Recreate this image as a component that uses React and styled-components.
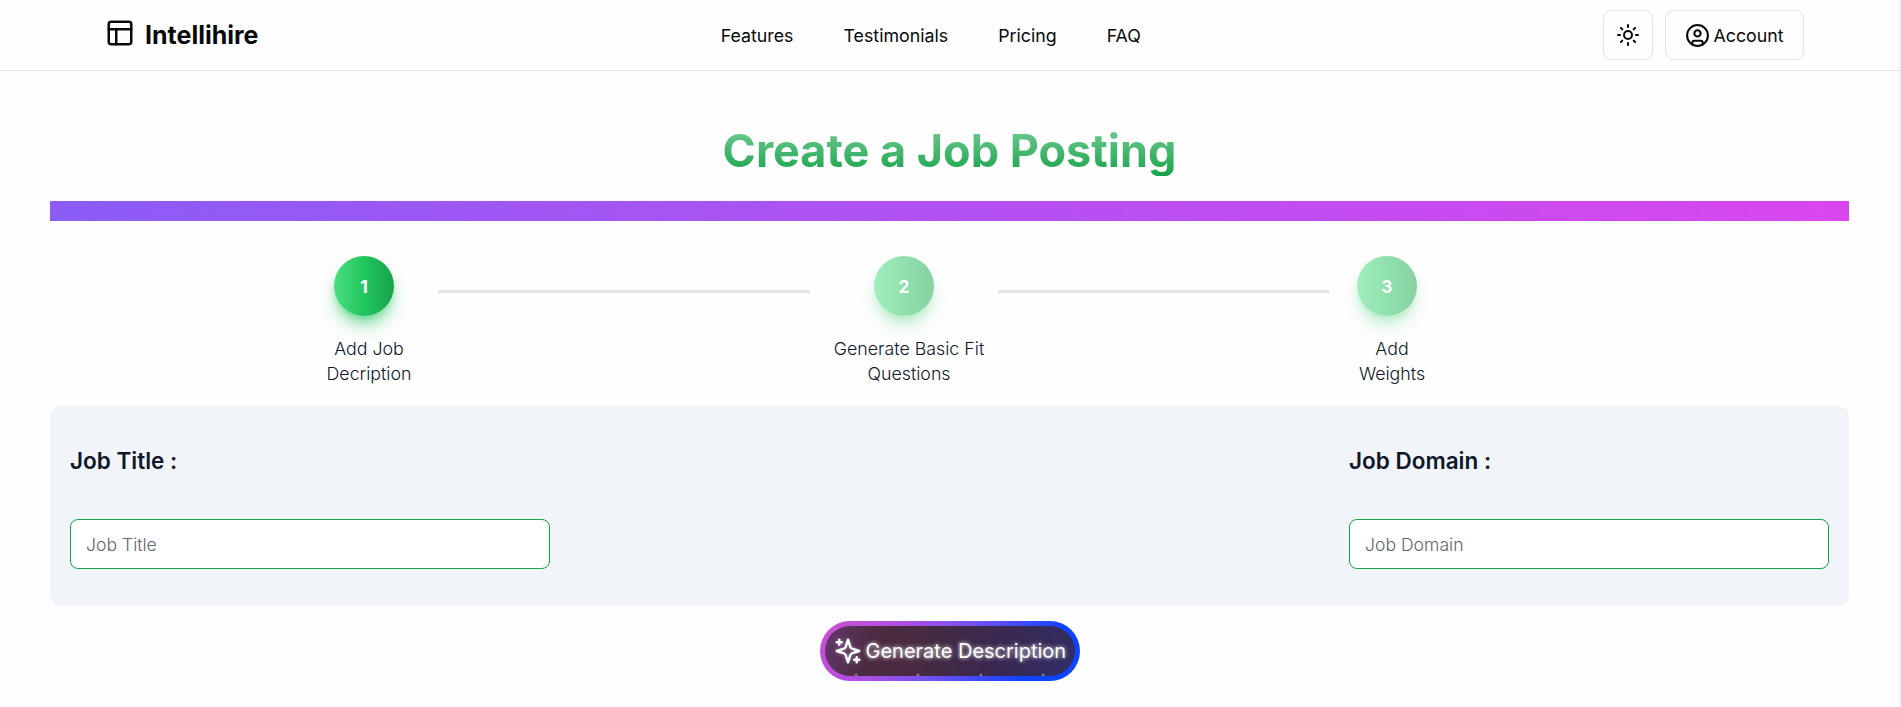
import React from "react";
import styled, { createGlobalStyle } from "styled-components";
import { PanelsTopLeft, Sun, CircleUser } from "lucide-react";

const GlobalStyle = createGlobalStyle`
  *, *::before, *::after { box-sizing: border-box; }
  html { background: #f1f1f1; }
  body {
    margin: 0;
    overflow: hidden;
    font-family: Inter, "Liberation Sans", sans-serif;
    font-size: 17.8px;
    line-height: 25px;
    color: #09090b;
  }
`;

const Page = styled.div`
  width: calc(100vw - 2px);
  height: 100vh;
  background: #fefefe;
`;

const Header = styled.header`
  height: 71px;
  padding: 0 95px 0 105px;
  display: flex;
  justify-content: space-between;
  align-items: center;
  border-bottom: 1px solid #e4e4e7;
`;

const Brand = styled.a`
  display: flex;
  align-items: center;
  gap: 10px;
  font-size: 25px;
  font-weight: 700;
  svg { margin-top: -4px; }
`;

const Nav = styled.nav`
  display: flex;
  gap: 50px;
`;

const NavLink = styled.a`
  color: #09090b;
`;

const Actions = styled.div`
  display: flex;
  justify-content: flex-end;
  gap: 12px;
`;

const OutlineButton = styled.button`
  height: 50px;
  width: ${(p) => p.$width}px;
  display: flex;
  align-items: center;
  justify-content: center;
  gap: 3px;
  padding: 0;
  border: 1px solid #e4e4e7;
  border-radius: 8px;
  background: transparent;
  font: inherit;
  color: inherit;
`;

const Main = styled.main`
  padding: 54px 50px 0;
  display: flex;
  flex-direction: column;
`;

const Title = styled.h1`
  margin: 0 auto 25px;
  font-size: 45px;
  line-height: 51px;
  font-weight: 700;
  color: transparent;
  background: linear-gradient(to bottom, #77cc96, #16a34a);
  background-clip: text;
  -webkit-background-clip: text;
`;

const Banner = styled.div`
  height: 20px;
  background: linear-gradient(to right, #8b5cf6, #d946ef);
`;

const Steps = styled.ol`
  margin: 35px 0 0;
  padding: 0 0 0 250px;
  height: 150px;
  display: flex;
  list-style: none;
`;

const Step = styled.li`
  width: ${(p) => p.$width}px;
  display: flex;
  flex-direction: column;
  align-items: center;
  gap: 20px;
`;

const StepCircle = styled.div`
  width: 60px;
  height: 60px;
  margin-right: 10px;
  flex: none;
  display: flex;
  align-items: center;
  justify-content: center;
  border-radius: 50%;
  color: #fff;
  font-weight: 700;
  background: linear-gradient(to right, #4ade80, #22c55e, #16a34a);
  box-shadow: 0 12px 18px -3px rgba(34, 197, 94, 0.5), 0 5px 8px -3px rgba(34, 197, 94, 0.5);
  opacity: ${(p) => (p.$active ? 1 : 0.5)};
`;

const StepLabel = styled.div`
  font-weight: 300;
  text-align: center;
  white-space: pre-line;
  color: #0f172a;
`;

const Connector = styled.li`
  width: ${(p) => p.$width}px;
  height: 3px;
  margin: 34px 10px 0 0;
  background: #e4e4e7;
`;

const Panel = styled.section`
  height: 200px;
  padding: 43px 20px 0;
  display: flex;
  justify-content: space-between;
  border-radius: 10px;
  background: #f1f5f9;
`;

const Field = styled.label`
  width: 480px;
  display: flex;
  flex-direction: column;
  gap: 46px;
`;

const FieldName = styled.span`
  font-size: 22.5px;
  line-height: 24px;
  font-weight: 600;
  color: #0f172a;
`;

const TextInput = styled.input`
  width: 100%;
  height: 50px;
  padding: 0 15px;
  border: 1px solid #16a34a;
  border-radius: 8px;
  background: #fff;
  font: inherit;
  font-size: 17.6px;
  font-weight: 300;
  &::placeholder { color: #64646c; opacity: 1; }
`;

const GenerateButton = styled.button`
  width: 260px;
  height: 60px;
  margin: 15px auto 0;
  padding: 5px;
  display: flex;
  border: 0;
  border-radius: 30px;
  background: linear-gradient(130deg, #d050d0 0%, #a94fe4 30%, #7650f0 50%, #0f44ff 80%);
  font: inherit;
`;

const GenerateFace = styled.span`
  flex: 1;
  display: flex;
  align-items: center;
  gap: 3px;
  padding-left: 8px;
  border-radius: 25px;
  overflow: hidden;
  color: #fff;
  font-size: 20px;
  font-weight: 400;
  white-space: nowrap;
  text-shadow: 0 0 4px #fff;
  background:
    radial-gradient(circle 2px at 31px 49px, #a9a0ac, transparent),
    radial-gradient(circle 2px at 93px 49px, #a9a0ac, transparent),
    radial-gradient(circle 2px at 156px 49px, #a9a0ac, transparent),
    radial-gradient(circle 2px at 218px 49px, #a9a0ac, transparent),
    radial-gradient(ellipse 55px 45px at 68px 28px, rgba(82, 42, 64, 0.45), transparent),
    linear-gradient(108deg, #66366e 0%, #4b2b43 19%, #432b42 42%, #3a2850 68%, #302e65 100%);
  svg { overflow: visible; filter: drop-shadow(0 0 2px rgba(255, 255, 255, 0.35)); }
`;

const SparklesIcon = () => (
  <svg width="30" height="30" viewBox="0 0 24 24" fill="none" stroke="currentColor" strokeWidth="2" strokeLinecap="round" strokeLinejoin="round">
    <path d="m12 3-1.912 5.813a2 2 0 0 1-1.275 1.275L3 12l5.813 1.912a2 2 0 0 1 1.275 1.275L12 21l1.912-5.813a2 2 0 0 1 1.275-1.275L21 12l-5.813-1.912a2 2 0 0 1-1.275-1.275L12 3Z" />
    <path d="M5 3v4M19 17v4M3 5h4M17 19h4" />
  </svg>
);

const links = ["Features", "Testimonials", "Pricing", "FAQ"];
const fields = ["Job Title", "Job Domain"];

export default function App() {
  return (
    <Page>
      <GlobalStyle />
      <Header>
        <Brand>
          <PanelsTopLeft size={30} />
          Intellihire
        </Brand>
        <Nav>
          {links.map((name) => (
            <NavLink key={name}>{name}</NavLink>
          ))}
        </Nav>
        <Actions>
          <OutlineButton $width={50} aria-label="Toggle theme">
            <Sun size={24} />
          </OutlineButton>
          <OutlineButton $width={139}>
            <CircleUser size={25} />
            Account
          </OutlineButton>
        </Actions>
      </Header>
      <Main>
        <Title>Create a Job Posting</Title>
        <Banner />
        <Steps>
          <Step $width={138}>
            <StepCircle $active>1</StepCircle>
            <StepLabel>{"Add Job\nDecription"}</StepLabel>
          </Step>
          <Connector $width={372} />
          <Step $width={178}>
            <StepCircle>2</StepCircle>
            <StepLabel>{"Generate Basic Fit\nQuestions"}</StepLabel>
          </Step>
          <Connector $width={331} />
          <Step $width={106}>
            <StepCircle>3</StepCircle>
            <StepLabel>{"Add\nWeights"}</StepLabel>
          </Step>
        </Steps>
        <Panel>
          {fields.map((name) => (
            <Field key={name}>
              <FieldName>{name} :</FieldName>
              <TextInput placeholder={name} />
            </Field>
          ))}
        </Panel>
        <GenerateButton>
          <GenerateFace>
            <SparklesIcon />
            Generate Description
          </GenerateFace>
        </GenerateButton>
      </Main>
    </Page>
  );
}
